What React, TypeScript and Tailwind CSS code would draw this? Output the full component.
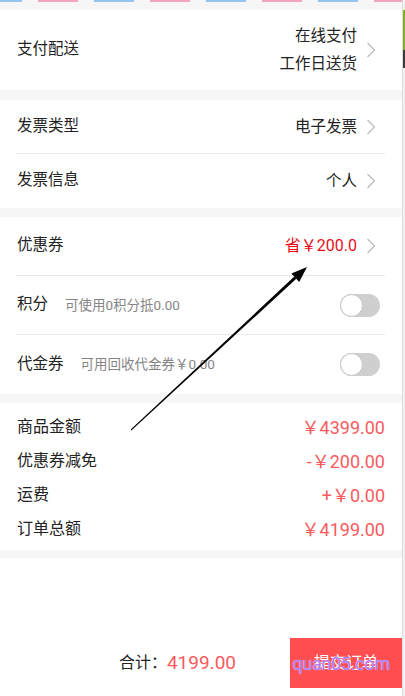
import { ReactNode } from 'react';

const font = { fontFamily: 'Roboto, "Noto Sans CJK SC", "Noto Sans", sans-serif' };

function Chevron() {
  return (
    <svg width="10" height="16" viewBox="0 0 10 16" className="shrink-0">
      <path d="M1.5 1 L8.5 8 L1.5 15" fill="none" stroke="#b8b8b8" strokeWidth="1.1" />
    </svg>
  );
}

function Toggle() {
  return (
    <div className="relative mr-[5px] h-[23px] w-[40px] rounded-full bg-[#cfcfcf]">
      <div className="absolute left-0 top-0 h-[23px] w-[23px] rounded-full border border-[#c4c4c4] bg-white" />
    </div>
  );
}

function LinkRow({ label, children, h, divider }: { label: string; children: ReactNode; h: string; divider?: boolean }) {
  return (
    <div className={`mx-4 mr-[17px] flex items-center justify-between ${h} ${divider ? 'border-b border-[#e8e8e8]' : ''}`}>
      <span className="ml-px text-[15.5px] text-[#222]">{label}</span>
      <div className="flex items-center">
        <div className="text-right text-[15.5px] leading-[28px] text-[#222]">{children}</div>
        <div className="flex w-[28px] justify-center">
          <Chevron />
        </div>
      </div>
    </div>
  );
}

function SwitchRow({ label, hint, divider }: { label: string; hint: string; divider?: boolean }) {
  return (
    <div className={`mx-4 mr-[17px] flex h-[59px] items-center justify-between ${divider ? 'border-b border-[#e8e8e8]' : ''}`}>
      <div className="flex items-center">
        <span className="ml-px text-[15.5px] text-[#222]">{label}</span>
        <span className="ml-[17px] text-[13.5px] text-[#858585]">{hint}</span>
      </div>
      <Toggle />
    </div>
  );
}

const Gap = ({ h }: { h: string }) => <div className={`${h} bg-[#f6f6f6]`} />;

export default function App() {
  const amounts = [
    ['商品金额', '￥4399.00'],
    ['优惠券减免', '-￥200.00'],
    ['运费', '+￥0.00'],
    ['订单总额', '￥4199.00'],
  ];

  return (
    <div className="relative flex h-[696px] w-[405px] overflow-hidden bg-white" style={font}>
      <div className="flex w-[402px] flex-col">
        <div className="h-[2px] bg-[repeating-linear-gradient(90deg,#93c4ef_0px,#93c4ef_22px,#f6f6f6_22px,#f6f6f6_38px,#f2a6bd_38px,#f2a6bd_78px,#f6f6f6_78px,#f6f6f6_94px,#93c4ef_94px,#93c4ef_112px)]" />
        <Gap h="h-[8px]" />

        <div className="bg-white">
          <LinkRow label="支付配送" h="h-[80px]">
            <div>在线支付</div>
            <div>工作日送货</div>
          </LinkRow>
        </div>
        <Gap h="h-[10px]" />

        <div className="bg-white">
          <LinkRow label="发票类型" h="h-[54px]" divider>
            电子发票
          </LinkRow>
          <LinkRow label="发票信息" h="h-[54px]">
            个人
          </LinkRow>
        </div>
        <Gap h="h-[9px]" />

        <div className="bg-white">
          <LinkRow label="优惠券" h="h-[59px]" divider>
            <span className="text-[16px] text-[#e60f19]">省￥200.0</span>
          </LinkRow>
          <SwitchRow label="积分" hint="可使用0积分抵0.00" divider />
          <SwitchRow label="代金券" hint="可用回收代金券￥0.00" />
        </div>
        <Gap h="h-[9px]" />

        <div className="flex flex-col bg-white pb-[4px] pt-[7px]">
          {amounts.map(([k, v]) => (
            <div key={k} className="ml-[17px] mr-[17px] flex h-[34px] items-center justify-between">
              <span className="text-[16px] text-[#222]">{k}</span>
              <span className="text-[18px] text-[#f85a5e]">{v}</span>
            </div>
          ))}
        </div>
        <Gap h="h-[8px]" />

        <div className="flex-1 bg-white" />

        <div className="flex h-[50px] items-center">
          <div className="flex flex-1 items-center justify-end pr-[54px]">
            <span className="text-[16px] text-[#222]">合计：</span>
            <span className="text-[19px] text-[#f85a5e]">4199.00</span>
          </div>
          <div className="relative flex h-[50px] w-[112px] items-center justify-center bg-[#ff4d50]">
            <span className="text-[16px] text-white">提交订单</span>
            <span className="absolute inset-0 flex items-center justify-center pr-[10px] text-[18px] tracking-[-0.3px] text-[#a77bff] [text-shadow:0_0_1px_#fff]">
              quan05.com
            </span>
          </div>
        </div>
        <div className="h-[8px] bg-white" />
      </div>

      <div className="flex w-[3px] flex-col border-l border-[#dcdcdc] bg-[#f2f2f2]">
        <div className="h-[10px]" />
        <div className="h-[40px] bg-[#7fb02a]" />
        <div className="h-[18px] bg-[#3a3a3a]" />
      </div>

      <svg className="pointer-events-none absolute left-0 top-0" width="405" height="696">
        <polygon points="131.3,430.4 130.7,429.6 294.3,276.6 296.3,278.8" fill="#000" />
        <polygon points="307,267 299.2,282 291.4,273.6" fill="#000" />
      </svg>
    </div>
  );
}
